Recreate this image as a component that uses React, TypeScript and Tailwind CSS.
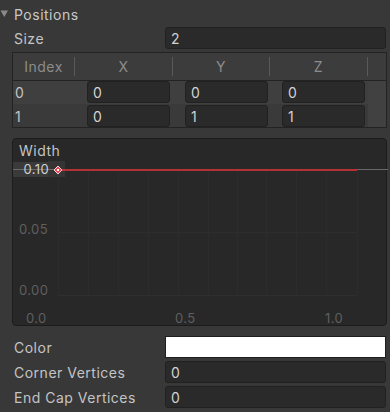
import React from 'react'

const field = 'h-[22px] rounded-[3px] border border-[#212121] bg-[#2a2a2a] flex items-center pl-[5px] text-[#d2d2d2]'

function PropRow({ label, children }: { label: string; children: React.ReactNode }) {
  return (
    <div className="flex h-[22px] items-center">
      <div className="w-[165px] pl-[14px] text-[#c4c4c4]">{label}</div>
      <div className="w-[221px]">{children}</div>
    </div>
  )
}

const rows = [
  { i: '0', x: '0', y: '0', z: '0', bg: 'bg-[#3f3f3f]' },
  { i: '1', x: '0', y: '1', z: '1', bg: 'bg-[#3a3a3a]' },
]

function CurvePanel() {
  // plot area in panel coords: x 45..344, y 32..156
  const vx = [45, 75, 105, 135, 165, 195, 224, 253, 283, 313, 344]
  return (
    <div className="relative ml-[12px] mt-[10px] h-[188px] w-[375px] rounded-[4px] border border-[#1c1c1c] bg-[#282828]">
      <div className="absolute left-[6px] top-[3px] text-[#c4c4c4]">Width</div>
      <svg className="absolute left-0 top-0" width="375" height="188">
        {vx.map((x) => (
          <line key={x} x1={x + 0.5} y1={32} x2={x + 0.5} y2={156} stroke="#2c2c2c" strokeWidth="1" />
        ))}
        <line x1={45} y1={93.5} x2={344} y2={93.5} stroke="#2d2d2d" strokeWidth="1" />
        <line x1={45} y1={156.5} x2={344} y2={156.5} stroke="#2f2f2f" strokeWidth="1" />
        <rect x="0" y="23" width="38" height="15" fill="#3a3a3a" />
        <rect x="35" y="22" width="17" height="16" fill="#353535" />
        <line x1={0} y1={30.5} x2={45} y2={30.5} stroke="#6a6a6a" strokeWidth="1" />
        <line x1={344} y1={30.5} x2={375} y2={30.5} stroke="#6a6a6a" strokeWidth="1" />
        <line x1={45} y1={31} x2={344} y2={31} stroke="#e0363a" strokeWidth="1.5" />
        <polygon points="45,27 49,31 45,35 41,31" fill="#e84a55" stroke="#f2d0d3" strokeWidth="1" />
        <rect x="44" y="30" width="2" height="2" fill="#ffffff" />
      </svg>
      <div className="absolute left-[6px] top-[23px] w-[30px] text-right text-[13px] leading-[15px] tracking-[0.4px] text-[#cfcfcf]">0.10</div>
      <div className="absolute left-[6px] top-[83px] text-[13px] leading-[15px] tracking-[0.4px] text-[#5f5f5f]">0.05</div>
      <div className="absolute left-[6px] top-[144px] text-[13px] leading-[15px] tracking-[0.4px] text-[#5f5f5f]">0.00</div>
      <div className="absolute left-[13px] top-[172px] text-[13px] leading-[15px] tracking-[0.4px] text-[#5f5f5f]">0.0</div>
      <div className="absolute left-[162px] top-[172px] text-[13px] leading-[15px] tracking-[0.4px] text-[#5f5f5f]">0.5</div>
      <div className="absolute left-[312px] top-[172px] text-[13px] leading-[15px] tracking-[0.4px] text-[#5f5f5f]">1.0</div>
    </div>
  )
}

export default function App() {
  return (
    <div className="h-[412px] w-[390px] overflow-hidden bg-[#383838] text-[14px] leading-[17px] tracking-[0.5px] font-['Inter','Liberation_Sans',sans-serif]">
      <div className="flex h-[27px] items-center pt-[2px]">
        <svg width="14" height="25" viewBox="0 0 14 25" className="shrink-0">
          <polygon points="0.5,8.5 8,8.5 4.25,15" fill="#8a8a8a" />
        </svg>
        <span className="text-[#c8c8c8]">Positions</span>
      </div>

      <PropRow label="Size">
        <div className={field}>2</div>
      </PropRow>

      <div className="ml-[12px] mt-[3px] w-[375px] border border-[#232323]">
        <div className="flex h-[28px] border-b border-[#232323] bg-[#3c3c3c] text-[#8c8c8c]">
          {[
            { t: 'Index', w: 'w-[62px]' },
            { t: 'X', w: 'w-[98px]' },
            { t: 'Y', w: 'w-[97px]' },
            { t: 'Z', w: 'w-[98px]' },
          ].map((c) => (
            <div key={c.t} className={`flex items-center ${c.w}`}>
              <div className="flex-1 text-center">{c.t}</div>
              <div className="h-[19px] w-px bg-[#5a5a5a]" />
            </div>
          ))}
          <div className="flex-1" />
        </div>
        {rows.map((r, idx) => (
          <div key={r.i} className={`flex h-[23px] ${r.bg} ${idx === 1 ? 'items-end' : 'items-start'}`}>
            <div className="flex h-[22px] w-[62px] items-center pl-[2px] text-[#c4c4c4]">{r.i}</div>
            <div className="w-[98px] pl-[12px]"><div className={`${field} w-[83px]`}>{r.x}</div></div>
            <div className="w-[97px] pl-[12px]"><div className={`${field} w-[83px]`}>{r.y}</div></div>
            <div className="w-[98px] pl-[12px]"><div className={`${field} w-[83px]`}>{r.z}</div></div>
            <div className="h-full flex-1 bg-[#414141]" />
          </div>
        ))}
      </div>

      <CurvePanel />

      <div className="mt-[10px] flex flex-col gap-[3px]">
        <PropRow label="Color">
          <div className="h-[22px] border border-[#1e1e1e] bg-white" />
        </PropRow>
        <PropRow label="Corner Vertices">
          <div className={field}>0</div>
        </PropRow>
        <PropRow label="End Cap Vertices">
          <div className={field}>0</div>
        </PropRow>
      </div>
    </div>
  )
}
